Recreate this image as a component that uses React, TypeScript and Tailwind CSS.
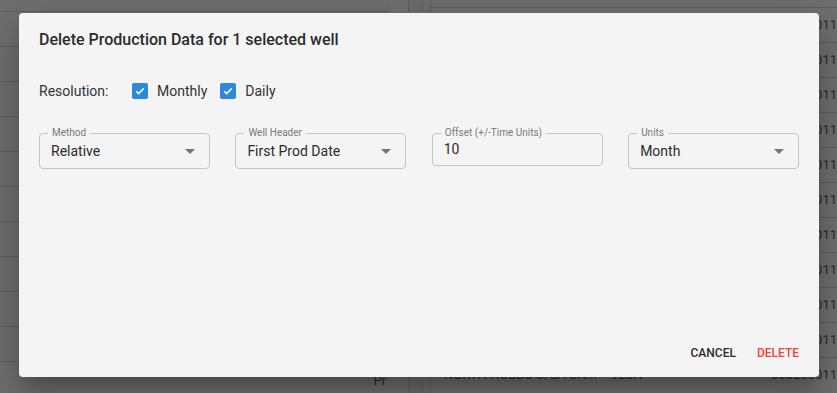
import React from 'react';

const rows = Array.from({ length: 11 });

const Check = () => (
  <span className="flex h-4 w-4 items-center justify-center rounded-[2px] bg-[#2f88de]">
    <svg viewBox="0 0 16 16" className="h-3 w-3">
      <path d="M3 8.5l3.2 3L13 4.5" fill="none" stroke="#fff" strokeWidth="2" />
    </svg>
  </span>
);

const Arrow = () => (
  <svg viewBox="0 0 10 5" className="h-[5px] w-[10px]">
    <path d="M0 0h10L5 5z" fill="#757575" />
  </svg>
);

const Field = ({ label, value, select = true }: { label: string; value: string; select?: boolean }) => (
  <div
    className={`relative flex items-center justify-between rounded-[4px] border border-[#c6c6c6] pl-[11px] pr-[14px] ${
      select ? 'h-[36px]' : 'h-[33px]'
    }`}
  >
    <span className="absolute left-[8px] top-[-7px] bg-[#f4f4f4] px-[4px] text-[10px] leading-[12px] text-[#7a7a7a]">
      {label}
    </span>
    <span className={`text-[14px] text-[#2b2b2b] ${select ? 'pt-[1px]' : 'pt-[0px]'}`}>{value}</span>
    {select && <Arrow />}
  </div>
);

export default function App() {
  return (
    <div className="relative h-[393px] w-[837px] overflow-hidden bg-[#707070] font-['Roboto',sans-serif]">
      {/* dimmed page behind */}
      <div className="flex h-full">
        <div className="w-[390px] pt-[11px]">
          {rows.map((_, i) => (
            <div key={i} className="flex h-[35px] items-end justify-end border-t border-[#606060] pr-[4px]">
              {i === 10 && <span className="pb-[6px] text-[13px] text-[#2a2a2a]">Pr</span>}
            </div>
          ))}
        </div>
        <div className="w-[18px] bg-[#727272]" />
        <div className="w-[14px] border-l border-[#626262] bg-[#6d6d6d]" />
        <div className="w-[8px] border-l border-[#626262] bg-[#6f6f6f]" />
        <div className="flex-1 border-l border-[#5f5f5f] pt-[7px]">
          {rows.map((_, i) => (
            <div
              key={i}
              className="flex h-[35px] items-center border-t border-[#5f5f5f] pl-[13px] text-[13px] text-[#2a2a2a]"
            >
              {i === 10 ? (
                <>
                  <span className="w-[167px]">NORTH HOBBS G/SA UN...</span>
                  <span className="w-[145px]">925H</span>
                  <span className="flex-1 text-right">300255011</span>
                </>
              ) : (
                <span className="flex-1 text-right">5011</span>
              )}
            </div>
          ))}
        </div>
      </div>

      {/* dialog */}
      <div className="absolute left-[19px] top-[13px] flex h-[364px] w-[800px] flex-col rounded-[4px] bg-[#f4f4f4] px-[20px] shadow-[0_11px_15px_-7px_rgba(0,0,0,0.2),0_24px_38px_3px_rgba(0,0,0,0.14),0_9px_46px_8px_rgba(0,0,0,0.12)]">
        <h2 className="pt-[17px] text-[16px] font-medium leading-[20px] text-[#2b2b2b]">
          Delete Production Data for 1 selected well
        </h2>
        <div className="mt-[31px] flex h-[20px] items-center text-[14px] text-[#333]">
          <span className="w-[93px]">Resolution:</span>
          <Check />
          <span className="ml-[9px] mr-[13px]">Monthly</span>
          <Check />
          <span className="ml-[9px]">Daily</span>
        </div>
        <div className="mt-[32px] grid w-[760px] grid-cols-4 items-start gap-[25.5px]">
          <Field label="Method" value="Relative" />
          <Field label="Well Header" value="First Prod Date" />
          <Field label="Offset (+/-Time Units)" value="10" select={false} />
          <Field label="Units" value="Month" />
        </div>
        <div className="mt-auto flex justify-end gap-[21px] pb-[16px] text-[12px] font-medium leading-[16px]">
          <span className="text-[#2b2b2b]">CANCEL</span>
          <span className="text-[#f44336]">DELETE</span>
        </div>
      </div>
    </div>
  );
}
